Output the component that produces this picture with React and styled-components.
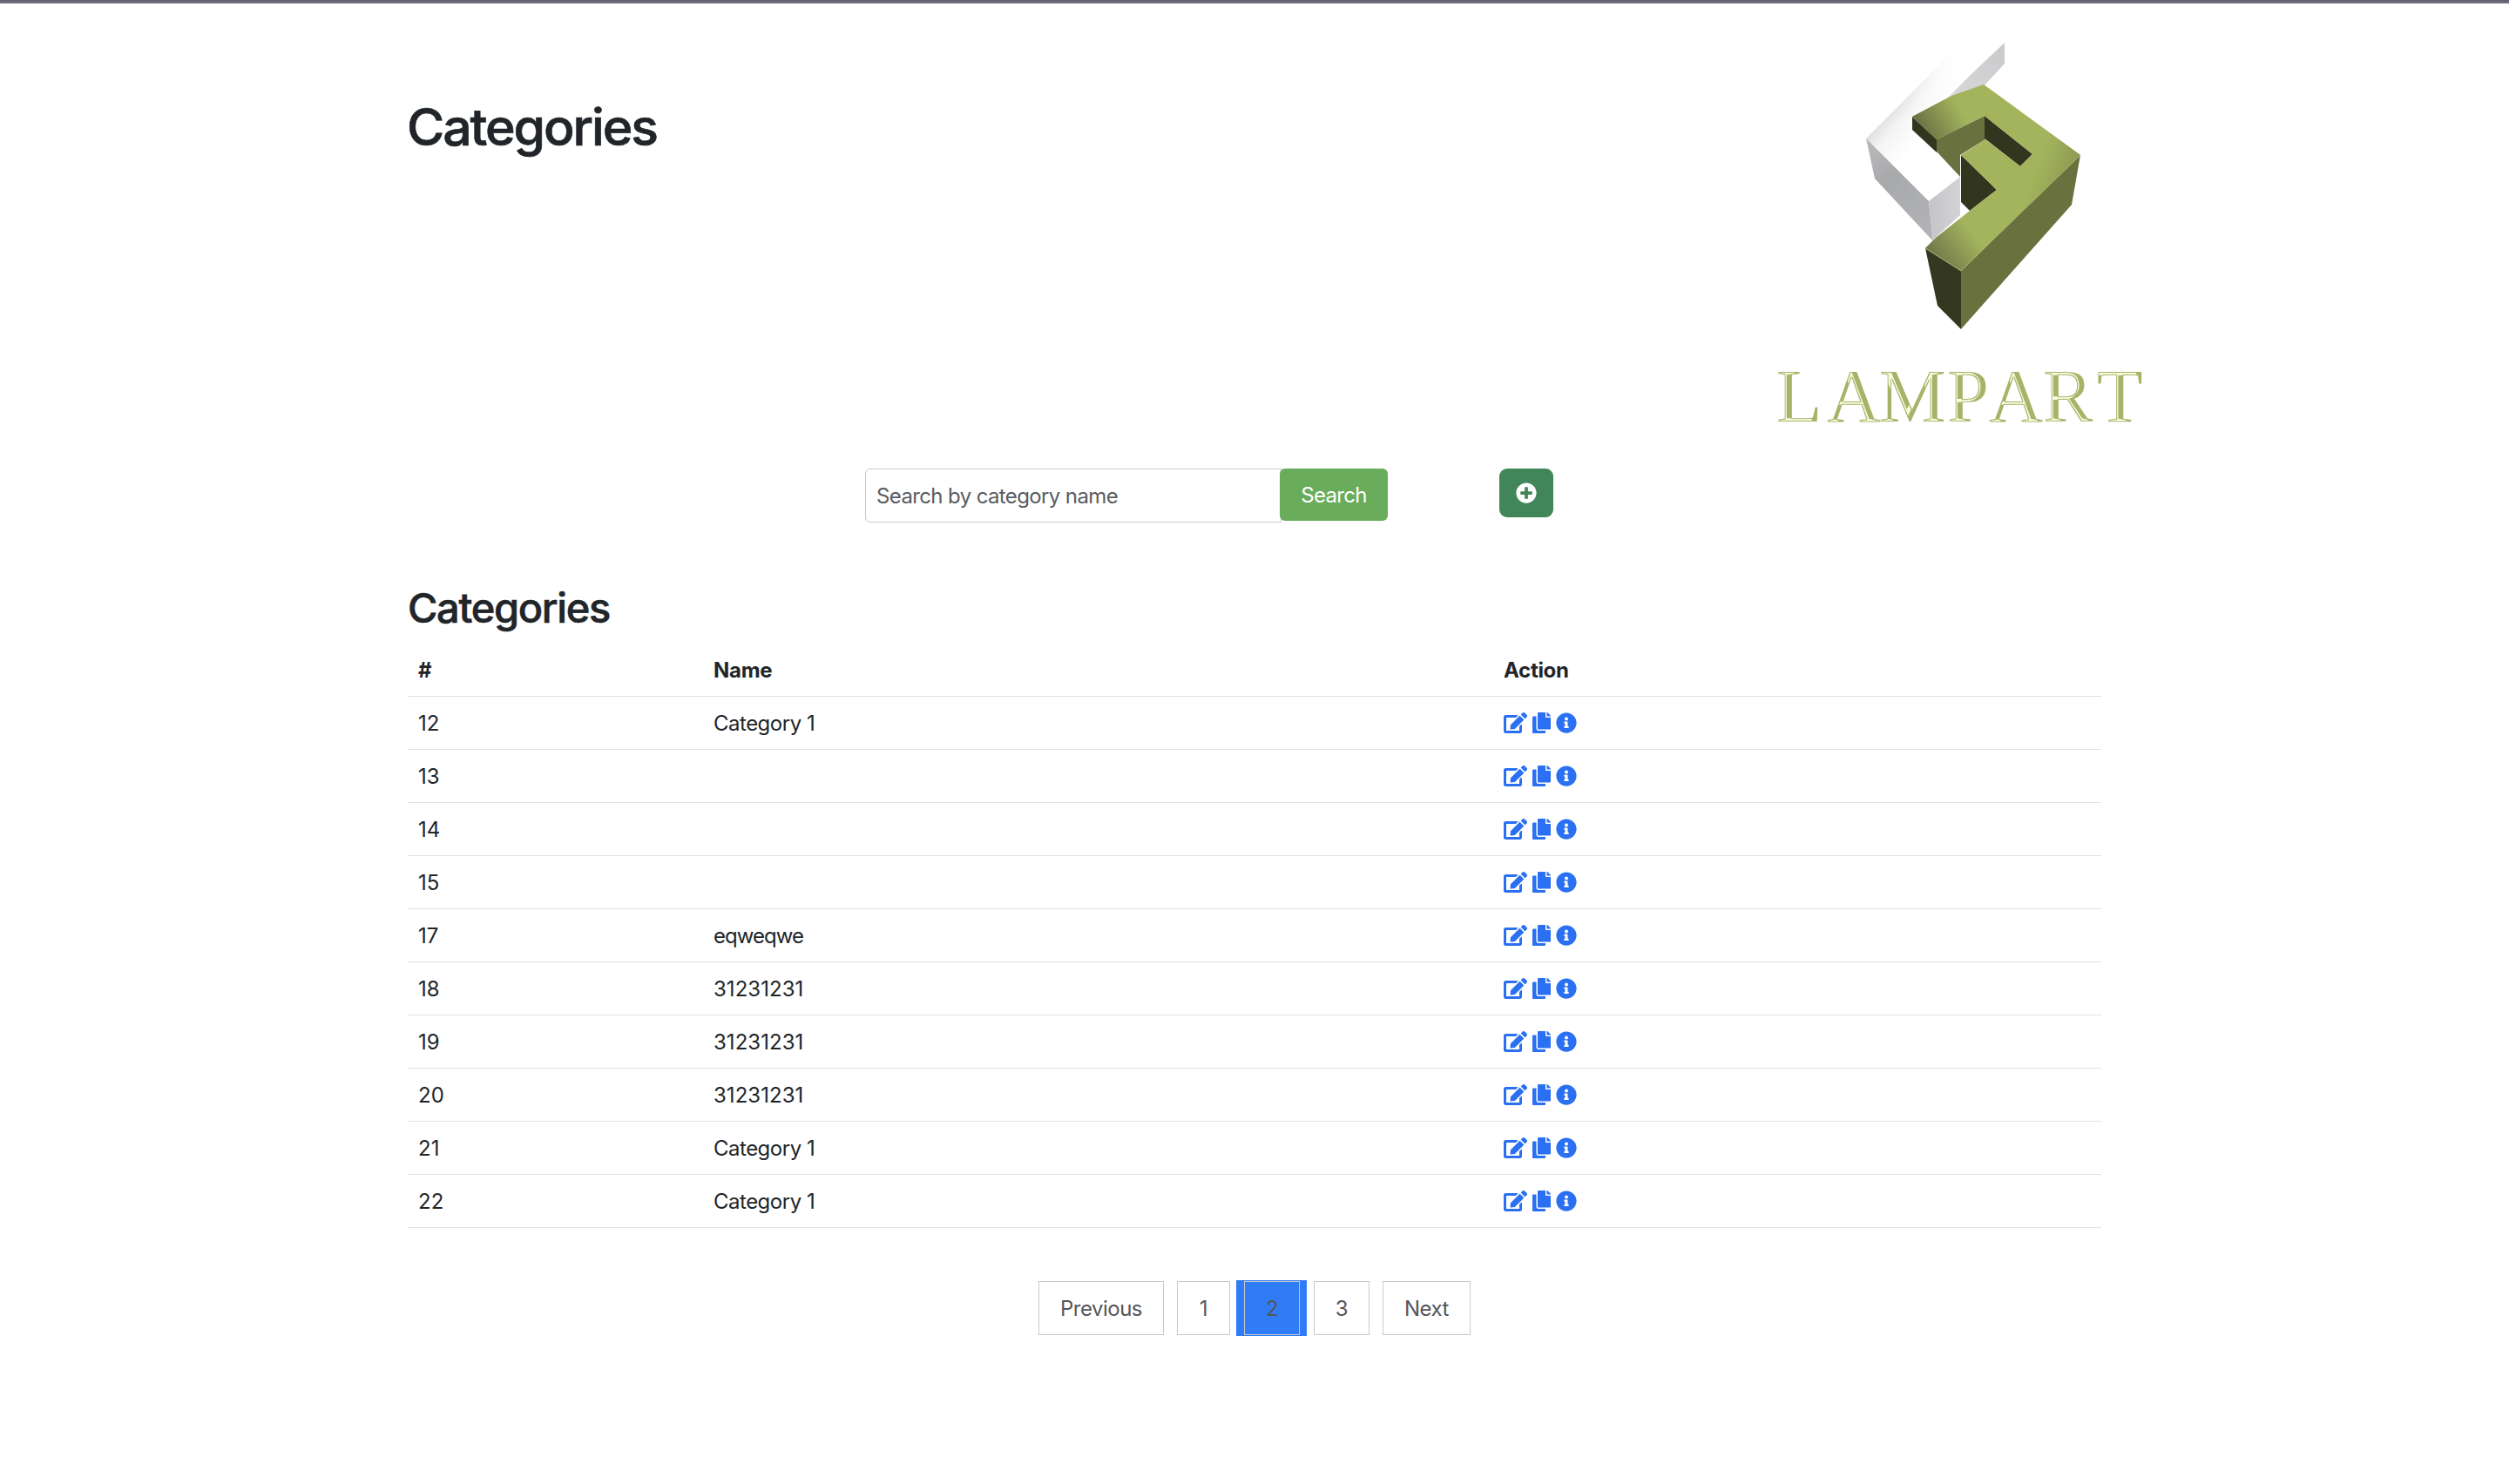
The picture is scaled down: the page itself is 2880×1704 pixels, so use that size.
import React from "react";
import styled, { createGlobalStyle } from "styled-components";
import { FaEdit, FaCopy, FaInfoCircle, FaPlusCircle } from "react-icons/fa";

const GlobalStyle = createGlobalStyle`
  *, *::before, *::after { box-sizing: border-box; }
  body {
    margin: 0;
    background: #fff;
    color: #212529;
    font-family: Inter, "Liberation Sans", sans-serif;
    font-size: 24px;
    line-height: 36px;
  }
`;

const Page = styled.div`
  min-height: 1704px;
  border-top: 2px solid #626472;
`;

const TopLine = styled.div`
  height: 2px;
  background: #727084;
`;

const Header = styled.header`
  display: flex;
  justify-content: space-between;
  align-items: flex-start;
  height: 534px;
  padding: 36px 414px 0 467px;
`;

const Title = styled.h1`
  margin: 70px 0 0;
  font-size: 59px;
  line-height: 72px;
  font-weight: 500;
  letter-spacing: -2.1px;
  -webkit-text-stroke: 0.7px currentColor;
`;

const LogoSvg = styled.svg`
  display: block;
  width: 432px;
  height: 480px;
`;

const Wordmark = styled.text`
  font-family: "Liberation Serif", serif;
  font-size: 86px;
  fill: #a5b468;
`;

const Toolbar = styled.div`
  display: flex;
  align-items: flex-start;
  padding-left: 993px;
`;

const SearchForm = styled.form`
  display: flex;
  align-items: flex-start;
  margin-right: 128px;
`;

const SearchInput = styled.input`
  width: 478px;
  height: 62px;
  margin-right: -2px;
  padding: 0 12px;
  border: 1px solid #c9c9c9;
  border-radius: 6px 0 0 6px;
  font: inherit;
  letter-spacing: -0.62px;
  outline: none;
  &::placeholder { color: #595c5f; opacity: 1; }
`;

const SearchButton = styled.button`
  width: 124px;
  height: 60px;
  padding: 2px 0 0;
  border: 0;
  border-radius: 6px;
  background: #69ad5c;
  color: #fff;
  font: inherit;
  letter-spacing: -0.7px;
`;

const AddButton = styled.button`
  display: flex;
  align-items: center;
  justify-content: center;
  width: 62px;
  height: 56px;
  padding: 0;
  border: 0;
  border-radius: 9px;
  background: #418658;
  color: #fff;
  font-size: 24px;
`;

const Content = styled.main`
  width: 1944px;
  margin: 69px auto 0;
`;

const Subtitle = styled.h2`
  margin: 0 0 12px;
  font-size: 47px;
  line-height: 58px;
  font-weight: 500;
  letter-spacing: -1.35px;
  -webkit-text-stroke: 0.6px currentColor;
`;

const Row = styled.div`
  display: grid;
  grid-template-columns: 339px 907px 1fr;
  height: 61px;
  padding: 13px 12px 11px;
  border-bottom: 1px solid #dee2e6;
  font-weight: ${(p) => (p.$head ? 700 : 400)};
  letter-spacing: ${(p) => (p.$head ? "-0.3px" : "0")};
`;

const Name = styled.span`
  letter-spacing: ${(p) => p.$tracking}px;
`;

const Actions = styled.div`
  display: flex;
  align-items: center;
  gap: 6px;
  height: 34px;
  color: #2b70f3;
`;

const ActionIcon = styled.a`
  display: flex;
  svg { width: ${(p) => p.$width}px; height: 24px; }
`;

const Pagination = styled.nav`
  display: flex;
  justify-content: center;
  margin-top: 60px;
`;

const PageItem = styled.div`
  padding: 1px ${(p) => p.$right}px 1px ${(p) => p.$left}px;
  margin: 0 ${(p) => p.$gap || 0}px 0 0;
  background: ${(p) => (p.$active ? "#2f7cf6" : "transparent")};
`;

const PageLink = styled.a`
  display: flex;
  align-items: center;
  justify-content: center;
  width: ${(p) => p.$width}px;
  height: 62px;
  padding-top: 1px;
  border: 1px solid #c8c8c8;
  color: #55565a;
  letter-spacing: -0.5px;
`;

const rows = [
  [12, "Category 1"],
  [13, ""],
  [14, ""],
  [15, ""],
  [17, "eqweqwe"],
  [18, "31231231"],
  [19, "31231231"],
  [20, "31231231"],
  [21, "Category 1"],
  [22, "Category 1"],
];

const pages = [
  { label: "Previous", width: 144, left: 0, right: 0, gap: 15 },
  { label: "1", width: 61, left: 0, right: 0, gap: 7 },
  { label: "2", width: 64, left: 9, right: 8, gap: 8, active: true },
  { label: "3", width: 64, left: 0, right: 0, gap: 15 },
  { label: "Next", width: 101, left: 0, right: 0, gap: 0 },
];

function trackingFor(name) {
  if (/^\d+$/.test(name)) return 0.05;
  return name.includes(" ") ? -0.5 : -0.95;
}

function Logo() {
  return (
    <LogoSvg viewBox="2034 40 432 480" role="img">
      <defs>
        <linearGradient id="whiteTop" gradientUnits="userSpaceOnUse" x1="2160" y1="120" x2="2204" y2="158">
          <stop offset="0" stopColor="#d0d0d2" />
          <stop offset=".5" stopColor="#f4f4f4" />
          <stop offset="1" stopColor="#ffffff" />
        </linearGradient>
        <linearGradient id="whiteFade" gradientUnits="userSpaceOnUse" x1="2145" y1="160" x2="2265" y2="55">
          <stop offset="0" stopColor="#ffffff" stopOpacity="0" />
          <stop offset=".4" stopColor="#ffffff" stopOpacity=".1" />
          <stop offset=".85" stopColor="#ffffff" />
        </linearGradient>
        <linearGradient id="whiteBack" gradientUnits="userSpaceOnUse" x1="2300" y1="60" x2="2240" y2="115">
          <stop offset="0" stopColor="#cbcbce" />
          <stop offset="1" stopColor="#d8d8da" />
        </linearGradient>
        <linearGradient id="greyLeft" gradientUnits="userSpaceOnUse" x1="2142" y1="180" x2="2218" y2="270">
          <stop offset="0" stopColor="#b6b6b8" />
          <stop offset=".3" stopColor="#a8a9ab" />
          <stop offset="1" stopColor="#b2b3b6" />
        </linearGradient>
        <linearGradient id="greyRight" gradientUnits="userSpaceOnUse" x1="2218" y1="240" x2="2250" y2="240">
          <stop offset="0" stopColor="#c6c6ca" />
          <stop offset="1" stopColor="#d3d3d6" />
        </linearGradient>
        <linearGradient id="armShade" gradientUnits="userSpaceOnUse" x1="2205" y1="146" x2="2248" y2="122">
          <stop offset="0" stopColor="#6d7345" />
          <stop offset="1" stopColor="#6d7345" stopOpacity="0" />
        </linearGradient>
        <linearGradient id="footShade" gradientUnits="userSpaceOnUse" x1="2226" y1="300" x2="2266" y2="270">
          <stop offset="0" stopColor="#747a4c" />
          <stop offset="1" stopColor="#747a4c" stopOpacity="0" />
        </linearGradient>
        <linearGradient id="edgeShade" gradientUnits="userSpaceOnUse" x1="2388" y1="192" x2="2344" y2="176">
          <stop offset="0" stopColor="#8c9752" />
          <stop offset="1" stopColor="#8c9752" stopOpacity="0" />
        </linearGradient>
        <filter id="bevel" x="-5%" y="-20%" width="110%" height="140%">
          <feMorphology in="SourceAlpha" operator="erode" radius="1" result="inner" />
          <feOffset in="SourceAlpha" dx="-6" dy="0" result="shifted" />
          <feComposite in="inner" in2="shifted" operator="in" result="lit" />
          <feFlood floodColor="#fafcdc" />
          <feComposite in2="lit" operator="in" result="light" />
          <feMerge>
            <feMergeNode in="SourceGraphic" />
            <feMergeNode in="light" />
          </feMerge>
        </filter>
      </defs>

      <path d="M2142 159 2301 49 2268 86 2195 134 2233 174 2250 203 2214 231Z" fill="#fff" />
      <path d="M2142 159 2240 61 2301 49 2238 112 2195 134 2205 160 2250 203 2214 231Z" fill="url(#whiteTop)" />
      <path d="M2142 159 2240 61 2301 49 2238 112 2195 134 2170 190Z" fill="url(#whiteFade)" />
      <path d="M2301 49V73L2278 98 2234 114 2264 84Z" fill="url(#whiteBack)" />
      <path d="M2142 159 2214 231 2219 277 2152 205Z" fill="url(#greyLeft)" />
      <path d="M2214 231 2250 203V247L2219 275Z" fill="url(#greyRight)" />

      <path d="M2195 134 2223 160V175L2195 149Z" fill="#33361f" />
      <path d="M2223 160 2278 133 2279 160 2250 178 2250 203 2223 174Z" fill="#69713f" />
      <path d="M2278 133 2333 177 2319 191 2278 159Z" fill="#33361f" />
      <path d="M2251 178 2292 218 2261 242 2251 232Z" fill="#33361f" />
      <path
        d="M2195 134 2240 110 2277 97 2388 178 2251 311 2210 285 2222 273 2261 242 2292 218 2251 178 2279 160 2319 191 2333 177 2278 133 2223 160Z"
        fill="#a3b45c"
      />
      <path d="M2195 134 2240 110 2277 97 2278 133 2223 160Z" fill="url(#armShade)" />
      <path d="M2251 311 2210 285 2222 273 2261 242 2292 218 2320 244Z" fill="url(#footShade)" />
      <path d="M2388 178 2277 97 2278 133 2333 177 2292 218 2320 244Z" fill="url(#edgeShade)" />
      <path d="M2388 178 2378 235 2251 378V311Z" fill="#69713f" />
      <path d="M2210 285 2251 311V378L2224 351Z" fill="#353820" />
      <path d="M2210 285 2251 311 2388 178" fill="none" stroke="#a9ba66" strokeWidth="1" />

      <Wordmark x="2039 2097 2157 2235 2283 2345 2407" y="484" filter="url(#bevel)">
        LAMPART
      </Wordmark>
    </LogoSvg>
  );
}

function CategoryRow({ id, name }) {
  return (
    <Row>
      <span>{id}</span>
      <Name $tracking={trackingFor(name)}>{name}</Name>
      <Actions>
        <ActionIcon $width={27}><FaEdit /></ActionIcon>
        <ActionIcon $width={21}><FaCopy /></ActionIcon>
        <ActionIcon $width={24}><FaInfoCircle /></ActionIcon>
      </Actions>
    </Row>
  );
}

export default function App() {
  return (
    <Page>
      <GlobalStyle />
      <TopLine />
      <Header>
        <Title>Categories</Title>
        <Logo />
      </Header>
      <Toolbar>
        <SearchForm>
          <SearchInput placeholder="Search by category name" />
          <SearchButton type="button">Search</SearchButton>
        </SearchForm>
        <AddButton type="button"><FaPlusCircle /></AddButton>
      </Toolbar>
      <Content>
        <Subtitle>Categories</Subtitle>
        <Row $head>
          <span>#</span>
          <span>Name</span>
          <span>Action</span>
        </Row>
        {rows.map(([id, name]) => (
          <CategoryRow key={id} id={id} name={name} />
        ))}
        <Pagination>
          {pages.map((p) => (
            <PageItem key={p.label} $left={p.left} $right={p.right} $gap={p.gap} $active={p.active}>
              <PageLink $width={p.width}>{p.label}</PageLink>
            </PageItem>
          ))}
        </Pagination>
      </Content>
    </Page>
  );
}
